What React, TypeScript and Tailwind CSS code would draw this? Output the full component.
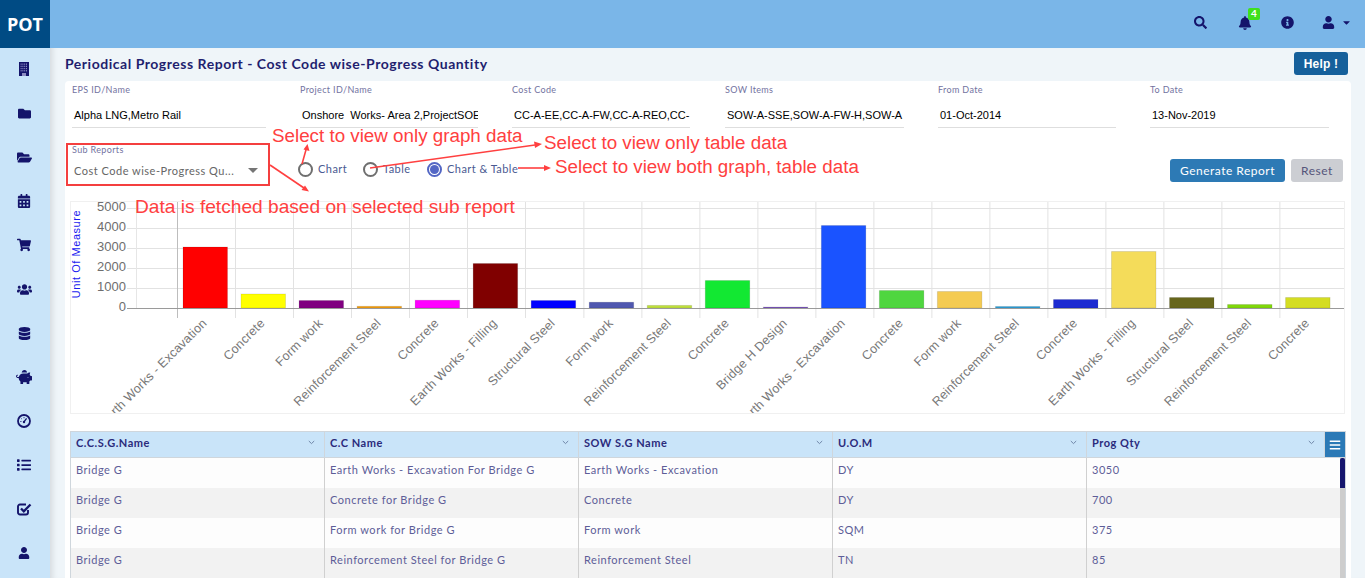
import React from "react";
import {
  FaSearch, FaBell, FaInfoCircle, FaUser, FaCaretDown, FaFolder, FaFolderOpen,
  FaCalendarAlt, FaShoppingCart, FaUsers, FaDatabase, FaPiggyBank, FaList, FaBars,
} from "react-icons/fa";

const NAVY = "text-[#14146b]";

function Gauge() {
  return (
    <svg width="14" height="14" viewBox="0 0 14 14" className={NAVY}>
      <circle cx="7" cy="7" r="6" fill="none" stroke="currentColor" strokeWidth="1.8" />
      <path d="M7 7.8 L9.6 4.4" stroke="currentColor" strokeWidth="1.3" />
      <circle cx="7" cy="8" r="1.2" fill="currentColor" />
      <path d="M3.4 7.5h1M7 3.2v1M4.4 4.6l.6.6" stroke="currentColor" strokeWidth="1" />
    </svg>
  );
}

function Building() {
  const w: React.ReactNode[] = [];
  for (let r = 0; r < 4; r++) {
    for (let c = 0; c < 4; c++) {
      w.push(<rect key={`${r}-${c}`} x={1.6 + c * 1.8} y={1.5 + r * 2.2} width="1" height="1.3" fill="#8d8dc2" />);
    }
  }
  return (
    <svg width="10" height="14" viewBox="0 0 10 14" className={NAVY}>
      <rect width="10" height="14" fill="currentColor" />
      {w}
      <rect x="3" y="11" width="4" height="3" fill="#8d8dc2" />
    </svg>
  );
}

function CheckBox() {
  return (
    <svg width="15" height="14" viewBox="0 0 15 14" className={NAVY}>
      <path d="M11 8v2.5A2 2 0 0 1 9 12.5H3A2 2 0 0 1 1 10.500V4.500A2 2 0 0 1 3 2.500H9" fill="none" stroke="currentColor" strokeWidth="1.9" />
      <path d="M4 6.500L6.800 9.300L13.500 2.500" fill="none" stroke="currentColor" strokeWidth="2.300" />
    </svg>
  );
}

const sideIcons = [
  <Building />, <FaFolder size={13} />, <FaFolderOpen size={15} />, <FaCalendarAlt size={14} />,
  <FaShoppingCart size={14} />, <FaUsers size={15} />, <FaDatabase size={13} />, <FaPiggyBank size={16} />,
  <Gauge />, <FaList size={14} />, <CheckBox />, <FaUser size={12} />,
];

const fields = [
  { label: "EPS ID/Name", value: "Alpha LNG,Metro Rail", w: "w-[194px] mr-[34px]" },
  { label: "Project ID/Name", value: "Onshore  Works- Area 2,ProjectSOE", w: "w-[178px] mr-[34px]" },
  { label: "Cost Code", value: "CC-A-EE,CC-A-FW,CC-A-REO,CC-", w: "w-[178px] mr-[35px]" },
  { label: "SOW Items", value: "SOW-A-SSE,SOW-A-FW-H,SOW-A", w: "w-[179px] mr-[34px]" },
  { label: "From Date", value: "01-Oct-2014", w: "w-[178px] mr-[34px]" },
  { label: "To Date", value: "13-Nov-2019", w: "w-[179px]" },
];

const bars: [string, number, string][] = [
  ["#ff0000", 3050, "Earth Works - Excavation"],
  ["#ffff00", 700, "Concrete"],
  ["#800080", 375, "Form work"],
  ["#f59e0b", 85, "Reinforcement Steel"],
  ["#ff00ff", 390, "Concrete"],
  ["#800000", 2225, "Earth Works - Filling"],
  ["#0000ff", 375, "Structural Steel"],
  ["#5058b0", 290, "Form work"],
  ["#bfe03c", 130, "Reinforcement Steel"],
  ["#12e832", 1375, "Concrete"],
  ["#7e57c2", 35, "Bridge H Design"],
  ["#1a53ff", 4125, "Earth Works - Excavation"],
  ["#4fd63f", 875, "Concrete"],
  ["#f4cb52", 825, "Form work"],
  ["#2b9fd8", 75, "Reinforcement Steel"],
  ["#1c2bd1", 425, "Concrete"],
  ["#f4dc5a", 2825, "Earth Works - Filling"],
  ["#67661c", 525, "Structural Steel"],
  ["#80d80a", 175, "Reinforcement Steel"],
  ["#d4dd22", 525, "Concrete"],
];

function Chart() {
  const x0 = 176.6;
  const step = 58;
  return (
    <div className="h-[213px] w-[1275px] border border-[#f0f0f0]">
      <svg width="1273" height="211" viewBox="71 202 1273 211" className="block" fontFamily="'Liberation Sans', Arial, sans-serif">
        {[208.5, 228.5, 248.5, 268.5, 288.5].map((y) => (
          <line key={y} x1="127" x2="1345" y1={y} y2={y} stroke="#e2e2e2" />
        ))}
        <line x1="136.5" x2="136.5" y1="202" y2="308" stroke="#e6e6e6" />
        {Array.from({ length: 20 }).map((_, i) => {
          const x = Math.round(x0 + i * step) + 0.5 + (i > 6 ? 0.4 : 0);
          return <line key={i} x1={x} x2={x} y1="202" y2="318" stroke={i === 0 ? "#bdbdbd" : "#e2e2e2"} />;
        })}
        {bars.map(([c, v], i) => {
          const h = Math.max(v / 50, 1);
          return (
            <rect key={i} x={183 + i * 58.03} y={308 - h} width="44.5" height={h} fill={c} stroke="#000" strokeOpacity="0.1" />
          );
        })}
        <line x1="127" x2="1345" y1="308.5" y2="308.5" stroke="#9a9a9a" />
        {[5000, 4000, 3000, 2000, 1000, 0].map((v, i) => (
          <text key={v} x="126" y={211 + i * 20} textAnchor="end" fontSize="13" fill="#6e6e6e">{v}</text>
        ))}
        <text transform="translate(80 254) rotate(-90)" textAnchor="middle" fontSize="11" fill="#1a1af0" letterSpacing="0.55">Unit Of Measure</text>
        {bars.map(([, , l], i) => (
          <text key={i} transform={`translate(${207.5 + i * 58.03} 324) rotate(-45)`} textAnchor="end" fontSize="12.5" fill="#777" letterSpacing="0.2">{l}</text>
        ))}
      </svg>
    </div>
  );
}

const rows = [
  ["Bridge G", "Earth Works - Excavation For Bridge G", "Earth Works - Excavation", "DY", "3050"],
  ["Bridge G", "Concrete for Bridge G", "Concrete", "DY", "700"],
  ["Bridge G", "Form work for Bridge G", "Form work", "SQM", "375"],
  ["Bridge G", "Reinforcement Steel for Bridge G", "Reinforcement Steel", "TN", "85"],
];
const heads = ["C.C.S.G.Name", "C.C Name", "SOW S.G Name", "U.O.M", "Prog Qty"];
const colW = ["w-[254px]", "w-[254px]", "w-[254px]", "w-[254px]", "flex-1"];

function Table() {
  return (
    <div className="relative w-[1276px] border-x border-t border-[#cfd6dc] font-['Lato',sans-serif] text-[11px] tracking-[0.53px]">
      <div className="flex h-[26px] border-b border-[#cfd6dc] bg-[#c9e4f9] font-bold text-[#2b2b7c]">
        {heads.map((h, i) => (
          <div key={h} className={`${colW[i]} flex items-center justify-between border-r border-[#cfd6dc] pb-[2px] pl-[5px] pr-[8px]`}>
            <span>{h}</span>
            <svg width="7" height="5" viewBox="0 0 7 5" className="mr-[1px] mt-[-3px]"><path d="M.8 1l2.7 2.600L6.200 1" fill="none" stroke="#6f86a8" strokeWidth="1" /></svg>
          </div>
        ))}
        <div className="flex w-[20px] items-center justify-center bg-[#2b79b6] text-white"><FaBars size={12} /></div>
      </div>
      <div className="relative">
        {rows.map((r, ri) => (
          <div key={ri} className={`flex h-[30px] text-[#5d5d98] ${ri % 2 ? "bg-[#f2f2f2]" : "bg-[#fdfdfd]"}`}>
            {r.map((c, i) => (
              <div key={i} className={`${colW[i]} ${i < 4 ? "border-r border-[#d0d0d0]" : ""} pl-[5px] pt-[4px]`}>{c}</div>
            ))}
            <div className="w-[20px]" />
          </div>
        ))}
        <div className="absolute right-0 top-0 h-full w-[5px] bg-[#cdcdcd]">
          <div className="h-[30px] w-full rounded-t-[2px] bg-[#16166e]" />
        </div>
      </div>
    </div>
  );
}

function Radio({ label, on, w }: { label: string; on?: boolean; w: string }) {
  return (
    <div className={`flex items-center whitespace-nowrap ${w}`}>
      <span className={`flex h-[15px] w-[15px] shrink-0 items-center justify-center rounded-full border-2 ${on ? "border-[#5366c4]" : "border-[#6f6f6f]"}`}>
        {on && <span className="h-[9px] w-[9px] rounded-full bg-[#5366c4]" />}
      </span>
      <span className="ml-[5px] font-['Lato',sans-serif] text-[11px] tracking-[0.45px] text-[#4a5a92]">{label}</span>
    </div>
  );
}

function Annotations() {
  const note = "absolute whitespace-nowrap font-['Liberation_Sans',Arial,sans-serif] leading-[22px] text-[#ff4040]";
  const R = "#ff4040";
  return (
    <>
      <div className={`${note} left-[272px] top-[125px] text-[18.800px]`}>Select to view only graph data</div>
      <div className={`${note} left-[544px] top-[132px] text-[18.800px]`}>Select to view only table data</div>
      <div className={`${note} left-[555px] top-[156px] text-[18.800px]`}>Select to view both graph, table data</div>
      <div className={`${note} left-[135px] top-[196px] text-[19.150px]`}>Data is fetched based on selected sub report</div>
      <div className="absolute left-[66px] top-[143px] h-[43px] w-[204px] border-2 border-[#f43f3f]" />
      <svg className="pointer-events-none absolute left-0 top-0" width="1365" height="578">
        <g stroke={R} strokeWidth="1.6">
          <line x1="302" y1="164" x2="306.500" y2="148" />
          <line x1="370" y1="168" x2="535" y2="145" />
          <line x1="518" y1="168" x2="545" y2="168" />
          <line x1="270" y1="165" x2="304" y2="188" />
        </g>
        <g fill={R}>
          <polygon points="307.500,144 309.500,151 303.500,149.500" />
          <polygon points="542,144 534,141.500 535,148" />
          <polygon points="551,168 544,165 544,171" />
          <polygon points="309,191.500 305,185.500 301.500,190" />
        </g>
      </svg>
    </>
  );
}

export default function App() {
  return (
    <div className="relative flex h-[578px] w-[1365px] flex-col overflow-hidden font-['Lato',sans-serif]">
      <header className="flex h-12 shrink-0 items-center bg-[#7ab6e8]">
        <div className="flex h-12 w-[50px] items-center justify-center bg-[#004b84] font-['Open_Sans',sans-serif] text-[18px] font-bold text-white">POT</div>
        <div className={`ml-auto flex items-center pb-[3px] ${NAVY}`}>
          <FaSearch size={13} className="mr-[31px]" />
          <div className="relative mr-[29px]">
            <FaBell size={14} />
            <span className="absolute left-[10px] top-[-8px] flex h-[12px] w-[12px] items-center justify-center rounded-[2px] bg-[#3fe01c] text-[10px] font-bold text-white">4</span>
          </div>
          <FaInfoCircle size={13} className="mr-[28px]" />
          <FaUser size={13} className="mr-[6px]" />
          <FaCaretDown size={11} className="mr-[13px]" />
        </div>
      </header>
      <div className="flex min-h-0 flex-1">
        <aside className={`flex w-[50px] shrink-0 flex-col items-center bg-[#c9e4f9] pt-[3px] ${NAVY}`}>
          {sideIcons.map((ic, i) => (
            <div key={i} className="flex h-[44px] w-full shrink-0 items-center justify-center pb-[8px] pr-[2px]">{ic}</div>
          ))}
        </aside>
        <main className="min-w-0 flex-1 bg-[#eff5f9] pl-[15px] pr-[14px] shadow-[inset_7px_0_6px_-5px_rgba(0,0,0,0.12)]">
          <div className="flex h-[33px] items-center justify-between">
            <h1 className="mt-[-2px] text-[14px] font-bold tracking-[0.53px] text-[#1f1f6f]">Periodical Progress Report - Cost Code wise-Progress Quantity</h1>
            <button className="mr-[3px] mt-[-2px] h-[23px] w-[54px] rounded-[3px] bg-[#16609b] font-['Liberation_Sans',sans-serif] text-[12px] font-bold tracking-[0.2px] text-white">Help !</button>
          </div>
          <section className="h-[520px] rounded-[4px] bg-white pl-[5px] pt-[3px]">
            <div className="flex pl-[2px]">
              {fields.map((f) => (
                <div key={f.label} className={`${f.w} h-[44px] border-b border-[#dedede]`}>
                  <div className="h-[12px] text-[9px] leading-[12px] tracking-[0.35px] text-[#73739f]">{f.label}</div>
                  <div className="mt-[12px] overflow-hidden whitespace-pre pl-[2px] font-['Liberation_Sans',sans-serif] text-[11px] leading-[14px] text-black">{f.value}</div>
                </div>
              ))}
            </div>
            <div className="flex h-[58px] items-start">
              <div className="ml-[2px] mt-[16px] w-[190px]">
                <div className="h-[12px] text-[9px] leading-[12px] tracking-[0.35px] text-[#73739f]">Sub Reports</div>
                <div className="mt-[7px] flex items-center justify-between pl-[2px] pr-[1px] text-[11px] leading-[16px] tracking-[0.5px] text-[#666]">
                  <span>Cost Code wise-Progress Qu...</span>
                  <svg width="10" height="5" viewBox="0 0 10 5" className="mr-[3px] mt-[-1px]"><path d="M0 0h10L5 5z" fill="#757575" /></svg>
                </div>
              </div>
              <div className="ml-[36px] mt-[33px] flex">
                <Radio label="Chart" w="w-[65px]" />
                <Radio label="Table" w="w-[64px]" />
                <Radio label="Chart & Table" on w="w-[92px]" />
              </div>
              <div className="ml-auto mr-[8px] mt-[31px] flex gap-[6px]">
                <button className="h-[23px] w-[115px] rounded-[3px] bg-[#2d7ab5] text-[12px] tracking-[0.5px] text-white">Generate Report</button>
                <button className="h-[23px] w-[52px] rounded-[3px] bg-[#ccced3] text-[12px] tracking-[0.5px] text-[#55557a]">Reset</button>
              </div>
            </div>
            <div className="mt-[15px]"><Chart /></div>
            <div className="mt-[17px]"><Table /></div>
          </section>
        </main>
      </div>
      <Annotations />
    </div>
  );
}
